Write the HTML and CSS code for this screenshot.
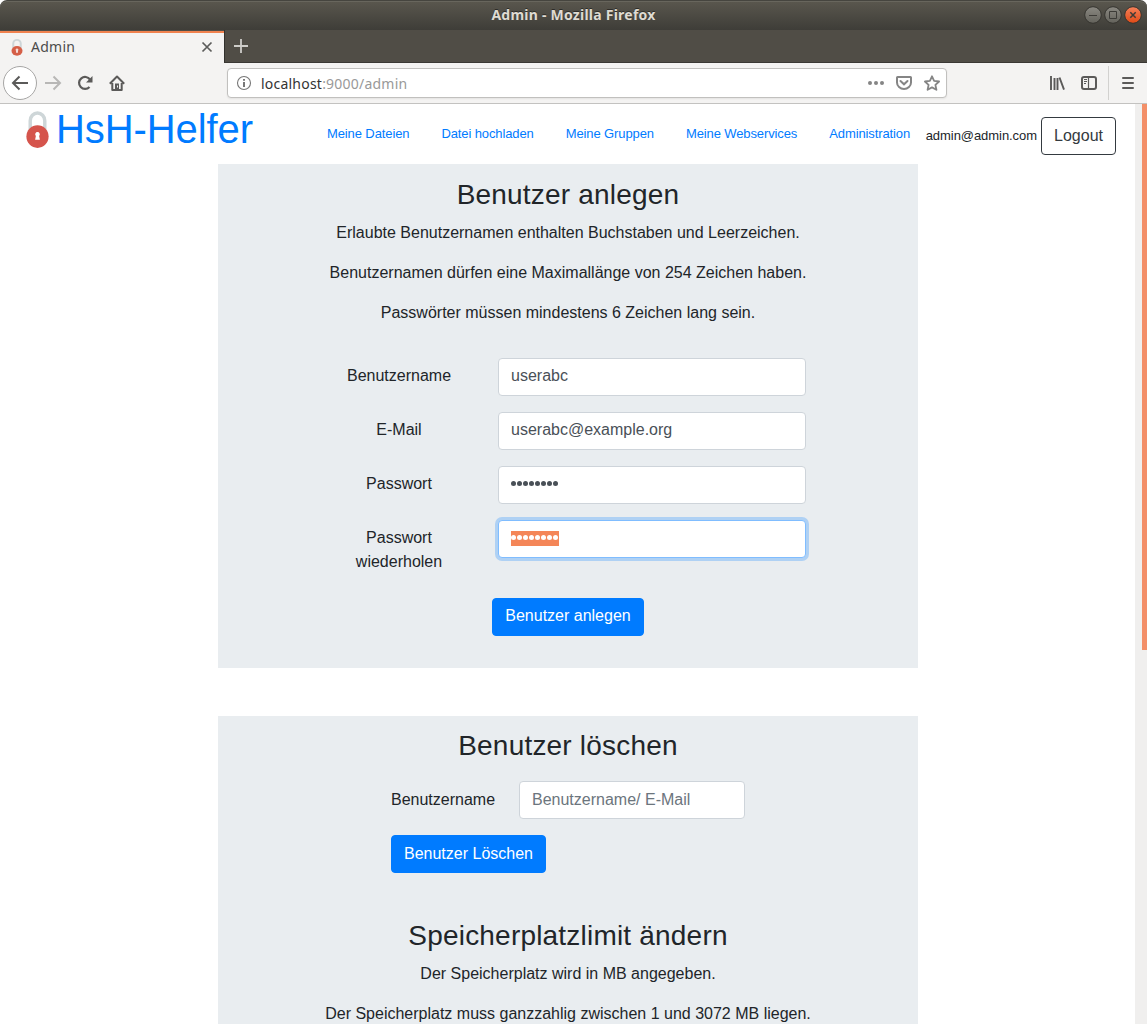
FILE: index.html
```html
<!DOCTYPE html>
<html lang="de">
<head>
<meta charset="utf-8">
<title>Admin</title>
<link rel="stylesheet" href="styles.css">
</head>
<body>
<div class="window">
  <div class="titlebar">
    <span class="window-title">Admin - Mozilla Firefox</span>
    <div class="window-buttons">
      <svg width="60" height="22" viewBox="0 0 60 22">
        <defs>
          <linearGradient id="grey" x1="0" y1="0" x2="0" y2="1"><stop offset="0" stop-color="#8b8982"/><stop offset="1" stop-color="#63625b"/></linearGradient>
          <linearGradient id="red" x1="0" y1="0" x2="0" y2="1"><stop offset="0" stop-color="#f5815a"/><stop offset="1" stop-color="#df4a16"/></linearGradient>
        </defs>
        <g stroke="#35342f"><circle cx="10" cy="11" r="8.3" fill="url(#grey)"/><circle cx="30" cy="11" r="8.3" fill="url(#grey)"/><circle cx="50" cy="11" r="8.3" fill="url(#red)"/></g>
        <g fill="none" stroke="#3c3b37"><path d="M6 11.5h8"/><path d="M26.500 7.500h7v7h-7z"/><path d="M47.300 8.300l5.400 5.400m0-5.400l-5.400 5.400" stroke-width="1.500"/></g>
      </svg>
    </div>
  </div>
  <div class="tabstrip">
    <div class="tab">
      <svg class="favicon" width="12" height="17" viewBox="0 0 24 38" preserveAspectRatio="none"><path d="M4.500 20V10a7.500 8 0 0 1 15 0v10" fill="none" stroke="#ced6d8" stroke-width="4"/><circle cx="12" cy="26.500" r="11" fill="#d55f47"/><path d="M12 21a3 3 0 0 1 2 5v5h-4v-5a3 3 0 0 1 2-5z" fill="#f6dcd8"/></svg>
      <span class="tab-label">Admin</span>
      <svg width="12" height="12" viewBox="0 0 12 12"><path d="M1.500 1.500l9 9m0-9l-9 9" stroke="#5c5c5b" stroke-width="1.700" fill="none"/></svg>
    </div>
    <div class="new-tab"><svg width="16" height="16" viewBox="0 0 16 16"><path d="M8 1v14M1 8h14" stroke="#cecdc9" stroke-width="1.800"/></svg></div>
  </div>
  <div class="toolbar">
    <div class="nav-buttons">
      <span class="back"><svg width="18" height="16" viewBox="0 0 18 16"><path d="M17 8H2M8.500 1.500L2 8l6.500 6.500" fill="none" stroke="#5b5a59" stroke-width="2"/></svg></span>
      <svg width="18" height="16" viewBox="0 0 18 16"><path d="M1 8h15M9.500 1.500L16 8l-6.500 6.500" fill="none" stroke="#b8b7b6" stroke-width="2"/></svg>
      <svg width="16" height="16" viewBox="0 0 16 16"><path d="M12.500 12A6 6 0 1 1 13 4.500" fill="none" stroke="#5b5a59" stroke-width="2.200"/><path d="M15.500 1v6.500H9z" fill="#5b5a59"/></svg>
      <svg class="home" width="16" height="16" viewBox="0 0 16 16"><path d="M.8 8.700L8 1.500l7.200 7.200M3.300 8v7h9.400V8" fill="none" stroke="#5b5a59" stroke-width="2" stroke-linejoin="round"/><path d="M6 8.500h4V15H6z" fill="#5b5a59"/><path d="M8 10.500h1v2H8z" fill="#f4f3f2"/></svg>
    </div>
    <div class="urlbar">
      <svg width="16" height="16" viewBox="0 0 16 16"><circle cx="8" cy="8" r="6.500" fill="none" stroke="#777" stroke-width="1.100"/><path d="M7 4h2v1.800H7zM7 7h2v5H7z" fill="#777"/></svg>
      <span class="url"><b>localhost</b>:9000/admin</span>
      <div class="url-actions">
        <svg width="16" height="16" viewBox="0 0 16 16"><g fill="#858585"><circle cx="2" cy="8" r="2"/><circle cx="8" cy="8" r="2"/><circle cx="14" cy="8" r="2"/></g></svg>
        <svg width="16" height="16" viewBox="0 0 16 16"><path d="M1 2.500Q1 2 1.500 2h13q.5 0 .5.500V7.500a7 6.500 0 0 1-14 0z" fill="none" stroke="#858585" stroke-width="2"/><path d="M4.500 6L8 9.300 11.500 6" fill="none" stroke="#858585" stroke-width="2" stroke-linecap="round"/></svg>
        <svg width="16" height="16" viewBox="0 0 16 16"><path d="M8 1.300l2.100 4.600 5 .6-3.700 3.400 1 4.900L8 12.400l-4.400 2.400 1-4.900L.9 6.500l5-.6z" fill="none" stroke="#858585" stroke-width="1.800" stroke-linejoin="round"/></svg>
      </div>
    </div>
    <div class="tools">
      <svg width="16" height="16" viewBox="0 0 16 16"><path d="M2 1v14M5.500 3v12M8.500 3v12M10.500 2.500L15 14.700" fill="none" stroke="#5b5a59" stroke-width="1.900"/></svg>
      <svg width="16" height="16" viewBox="0 0 16 16"><rect x="1" y="2" width="14" height="12" rx="2" fill="none" stroke="#5b5a59" stroke-width="2"/><path d="M7.500 2v12" stroke="#5b5a59" stroke-width="1.200"/><path d="M3 4.500h3M3 6.500h3M3 8.500h2" stroke="#5b5a59"/></svg>
    </div>
    <div class="menu"><svg width="12" height="14" viewBox="0 0 12 14"><path d="M1 2h10M1 7h10M1 12h10" stroke="#5b5a59" stroke-width="2" stroke-linecap="round"/></svg></div>
  </div>
  <div class="viewport">
    <div class="page">
      <header class="header">
        <svg class="logo" width="23" height="37" viewBox="0 0 24 38" preserveAspectRatio="none"><path d="M4.400 20V10a7.600 8 0 0 1 15.200 0v10" fill="none" stroke="#ced6d8" stroke-width="3.600"/><circle cx="12" cy="26.300" r="11.600" fill="#d5544c"/><path d="M12 21.500a2.400 2.400 0 0 1 1.700 4.100l.8 4h-5l.8-4A2.400 2.400 0 0 1 12 21.500z" fill="#fff"/></svg>
        <a class="brand">HsH-Helfer</a>
        <nav class="nav"><a>Meine Dateien</a><a>Datei hochladen</a><a>Meine Gruppen</a><a>Meine Webservices</a><a>Administration</a></nav>
        <span class="account">admin@admin.com</span>
        <button class="logout">Logout</button>
      </header>
      <section class="card create">
        <h3>Benutzer anlegen</h3>
        <p>Erlaubte Benutzernamen enthalten Buchstaben und Leerzeichen.</p>
        <p>Benutzernamen dürfen eine Maximallänge von 254 Zeichen haben.</p>
        <p>Passwörter müssen mindestens 6 Zeichen lang sein.</p>
        <form class="form">
          <label>Benutzername</label><div class="input">userabc</div>
          <label>E-Mail</label><div class="input">userabc@example.org</div>
          <label>Passwort</label><div class="input"><span class="dots"><i></i><i></i><i></i><i></i><i></i><i></i><i></i><i></i></span></div>
          <label>Passwort wiederholen</label><div class="input focused"><span class="dots selected"><i></i><i></i><i></i><i></i><i></i><i></i><i></i><i></i></span></div>
        </form>
        <button class="primary">Benutzer anlegen</button>
      </section>
      <section class="card manage">
        <h3>Benutzer löschen</h3>
        <form class="delete-form">
          <div class="delete-row"><label>Benutzername</label><div class="input placeholder">Benutzername/ E-Mail</div></div>
          <button class="primary">Benutzer Löschen</button>
        </form>
        <h3>Speicherplatzlimit ändern</h3>
        <p>Der Speicherplatz wird in MB angegeben.</p>
        <p>Der Speicherplatz muss ganzzahlig zwischen 1 und 3072 MB liegen.</p>
      </section>
    </div>
    <div class="scrollbar"><div class="thumb"></div></div>
  </div>
</div>
</body>
</html>
```
FILE: styles.css
```css
* { box-sizing: border-box; }
body { margin: 0; background: #fff; font: 16px/24px "Liberation Sans", Arial, sans-serif; color: #212529; }
svg { display: block; flex: none; }
.window { height: 1024px; display: flex; flex-direction: column; overflow: hidden; }

.titlebar { flex: none; height: 30px; display: grid; grid-template-columns: 1fr auto 1fr; align-items: center; border-radius: 7px 7px 0 0; background: linear-gradient(#5a574e, #3e3d38); border-top: 1px solid #46453f; box-shadow: inset 0 1px #68665d; }
.window-title { grid-column: 2; padding-bottom: 2px; font: bold 14px/20px "Noto Sans", sans-serif; color: #dfdbd2; text-shadow: 0 -1px #2d2c28; white-space: nowrap; letter-spacing: .24px; }
.window-buttons { justify-self: end; padding: 0 4px 1px 0; }
.tabstrip { flex: none; height: 33px; display: flex; background: #504d46; border-bottom: 1px solid #3a3834; }
.tab { height: 32px; width: 224px; display: flex; align-items: center; padding: 0 11px 2px; background: #f4f3f2; border-top: 2px solid #f0824f; margin-top: 1px; }
.favicon { margin-top: 1px; }
.tab-label { flex: 1; margin-left: 8px; font: 14px/20px "Noto Sans", sans-serif; letter-spacing: .25px; color: #4c4c4c; }
.new-tab { border-left: 1px solid #32312d; padding: 8px; }
.toolbar { flex: none; height: 41px; display: flex; align-items: center; background: #f4f3f2; border-bottom: 1px solid #c3c2c0; padding-left: 3px; }
.nav-buttons { display: flex; align-items: center; width: 224px; gap: 15px; }
.home { margin-left: 1px; }
.back { display: flex; align-items: center; justify-content: center; width: 34px; height: 34px; border-radius: 50%; background: #fff; border: 1px solid #a7a6a5; margin-right: -8px; }
.urlbar { width: 720px; height: 30px; display: flex; align-items: center; padding: 0 6px 0 8px; background: #fff; border: 1px solid #c1c0be; border-radius: 4px; box-shadow: 0 1px 2px #0001; }
.url { flex: 1; margin-left: 9px; padding-top: 1px; font: 14px/20px "Noto Sans", sans-serif; letter-spacing: .22px; color: #999; }
.url b { font-weight: 400; color: #333; }
.url-actions { display: flex; gap: 12px; }
.tools { display: flex; gap: 16px; margin-left: 102px; }
.menu { height: 34px; display: flex; align-items: center; margin-left: 11px; padding-left: 13px; border-left: 1px solid #d2d1cf; }

.viewport { flex: 1; min-height: 0; display: flex; }
.page { width: 1135px; overflow: hidden; }
.scrollbar { width: 12px; background: #f0efee; padding-left: 7px; }
.thumb { height: 546px; background: #f38f68; }
.header { height: 60px; display: flex; align-items: flex-start; padding: 7px 19px 0 26px; }
.brand { flex: none; width: 271px; margin: -7px 0 0 7px; font-size: 40px; line-height: 50px; letter-spacing: -.08px; color: #007bff; }
.nav { flex: none; display: flex; gap: 32px; font-size: 13px; letter-spacing: -.11px; margin-top: 11px; color: #007bff; white-space: nowrap; }
.account { font-size: 13px; letter-spacing: -.06px; margin: 13px 4px 0 auto; }
button { font: inherit; padding: 6px 12px; height: 38px; border-radius: 4px; white-space: nowrap; }
.logout { width: 75px; margin-top: 6px; padding: 6px 0; border: 1px solid #343a40; color: #343a40; background: #fff; }
.primary { border: 1px solid #007bff; background: #007bff; color: #fff; }
.card { width: 700px; margin-left: 218px; background: #e9edf0; text-align: center; }
h3 { font-size: 28px; line-height: 34px; font-weight: 400; letter-spacing: .2px; margin: 0 0 9px; }
p { margin: 0 0 16px; }
.create { height: 504px; padding-top: 14px; }
.form { display: grid; grid-template-columns: 134px 308px; column-gap: 32px; width: 474px; margin: 33px 0 0 114px; row-gap: 16px; }
.form label { padding-top: 6px; height: 38px; }
.input { height: 38px; padding: 5px 12px; border: 1px solid #ced4da; border-radius: 4px; background: #fff; color: #495057; text-align: left; }
.dots { display: flex; align-items: center; width: 48px; height: 15px; margin-top: 5px; padding-bottom: 2px; }
.dots i { width: 5px; height: 5px; margin-right: 1px; border-radius: 50%; background: #495057; }
.focused { border-color: #80bdff; box-shadow: 0 0 0 3px #afd1f4; }
.dots.selected { background: #f48658; }
.selected i { background: #fff; }
.create .primary { width: 152px; margin: 40px 0 0; padding: 5px 12px 7px; }
.manage { height: 420px; margin-top: 48px; padding-top: 13px; }
.delete-form { width: 354px; margin: 18px 0 46px 173px; text-align: left; }
.delete-row { display: flex; margin-bottom: 16px; }
.delete-row label { width: 128px; padding-top: 7px; }
.delete-row .input { width: 226px; padding-top: 6px; }
.placeholder { color: #6c757d; }
.delete-form .primary { width: 155px; }
```
